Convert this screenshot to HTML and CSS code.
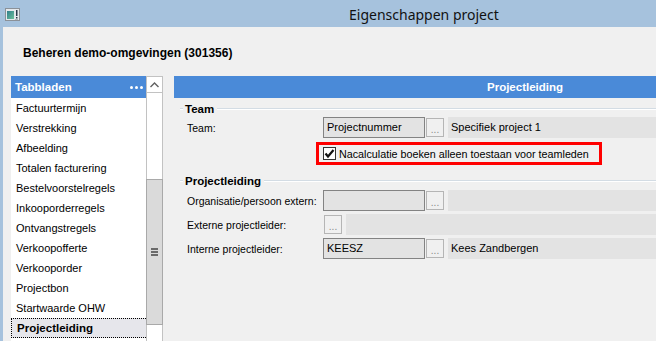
FILE: index.html
```html
<!DOCTYPE html>
<html lang="nl">
<head>
    <meta charset="UTF-8">
    <meta name="viewport" content="width=device-width, initial-scale=1.0">
    <title>Eigenschappen project</title>
    <link rel="stylesheet" href="styles.css">
</head>
<body>
    <div class="window">
        <!-- Titelbalk -->
        <div class="titlebar">
            <svg class="app-icon" width="15" height="13" viewBox="0 0 15 13">
                <defs>
                    <linearGradient id="tile" x1="0" y1="0" x2="1" y2="1">
                        <stop offset="0" stop-color="#2f7f8c"/>
                        <stop offset="1" stop-color="#6cbf9a"/>
                    </linearGradient>
                </defs>
                <rect x="0.5" y="0.5" width="14" height="12" fill="#e4e8ec" stroke="#8b9198"/>
                <rect x="2" y="3" width="7" height="8" fill="url(#tile)"/>
                <rect x="11" y="2" width="1.5" height="6" fill="#2a3a4a"/>
                <rect x="11" y="9" width="1.5" height="1.5" fill="#2a3a4a"/>
                <rect x="10" y="11" width="3" height="1" fill="#b0b6bc"/>
            </svg>
            <span class="title">Eigenschappen project</span>
        </div>

        <div class="frame">
            <h1 class="heading">Beheren demo-omgevingen (301356)</h1>

            <div class="panels">
                <!-- Tabbladen links -->
                <div class="tabs">
                    <div class="tabs-list">
                        <div class="tabs-header">
                            <span>Tabbladen</span>
                            <span class="dots"><i></i><i></i><i></i></span>
                        </div>
                        <ul class="tab-items">
                            <li>Factuurtermijn</li>
                            <li>Verstrekking</li>
                            <li>Afbeelding</li>
                            <li>Totalen facturering</li>
                            <li>Bestelvoorstelregels</li>
                            <li>Inkooporderregels</li>
                            <li>Ontvangstregels</li>
                            <li>Verkoopofferte</li>
                            <li>Verkooporder</li>
                            <li>Projectbon</li>
                            <li>Startwaarde OHW</li>
                            <li class="selected">Projectleiding</li>
                        </ul>
                    </div>
                    <div class="scrollbar">
                        <div class="scroll-up">
                            <svg width="9" height="6" viewBox="0 0 9 6">
                                <polyline points="0.5,5 4.5,1 8.5,5" fill="none" stroke="#606060" stroke-width="1.4"/>
                            </svg>
                        </div>
                        <div class="scroll-track"></div>
                        <div class="scroll-thumb">
                            <span class="grip"><i></i><i></i><i></i></span>
                        </div>
                        <div class="scroll-rest"></div>
                    </div>
                </div>

                <!-- Inhoud rechts -->
                <div class="content">
                    <div class="content-header">Projectleiding</div>

                    <div class="group-title">Team</div>
                    <div class="field-row first">
                        <span class="label">Team:</span>
                        <span class="input">Projectnummer</span>
                        <span class="browse">...</span>
                        <span class="value">Specifiek project 1</span>
                    </div>
                    <div class="check-row">
                        <span class="checkbox">
                            <svg width="11" height="11" viewBox="0 0 11 11">
                                <polyline points="1.5,5.5 4,8.5 9.5,2" fill="none" stroke="#111" stroke-width="2.2"/>
                            </svg>
                        </span>
                        <span class="check-label">Nacalculatie boeken alleen toestaan voor teamleden</span>
                    </div>

                    <div class="group-title second">Projectleiding</div>
                    <div class="field-row first-second">
                        <span class="label">Organisatie/persoon extern:</span>
                        <span class="input"></span>
                        <span class="browse">...</span>
                        <span class="value"></span>
                    </div>
                    <div class="field-row">
                        <span class="label">Externe projectleider:</span>
                        <span class="browse alone">...</span>
                        <span class="value"></span>
                    </div>
                    <div class="field-row">
                        <span class="label">Interne projectleider:</span>
                        <span class="input">KEESZ</span>
                        <span class="browse">...</span>
                        <span class="value">Kees Zandbergen</span>
                    </div>
                </div>
            </div>
        </div>
    </div>
</body>
</html>
```

FILE: styles.css
```css
html, body {
    margin: 0;
    height: 341px;
    overflow: hidden;
}

body {
    background-color: #a6c2dd;
    font-family: "Liberation Sans", Arial, sans-serif;
    font-size: 11px;
    color: #000;
}

.window {
    display: flex;
    flex-direction: column;
    height: 341px;
}

/* Titelbalk */
.titlebar {
    height: 27px;
    display: flex;
    align-items: center;
    flex-shrink: 0;
}

.app-icon {
    margin-left: 5px;
    margin-top: 1px;
}

.title {
    margin-left: 329px;
    padding-top: 2px;
    font-family: "Noto Sans", "Open Sans", sans-serif;
    font-size: 14px;
    color: #111;
}

.frame {
    flex: 1;
    margin-left: 3px;
    background-color: #f0f0f0;
    display: flex;
    flex-direction: column;
}

.heading {
    margin: 0;
    padding: 18px 0 0 20px;
    font-size: 12px;
    line-height: 16px;
    font-weight: bold;
}

.panels {
    display: flex;
    gap: 11px;
    margin-top: 15px;
    padding-left: 8px;
    flex: 1;
}

/* Tabbladen */
.tabs {
    width: 152px;
    display: flex;
}

.tabs-list {
    width: 135px;
    display: flex;
    flex-direction: column;
}

.tabs-header {
    height: 22px;
    background-color: #4a8ad8;
    color: #fff;
    font-weight: bold;
    font-size: 11.5px;
    display: flex;
    align-items: center;
    justify-content: space-between;
    padding: 0 3px 0 4px;
}

.dots {
    display: flex;
    gap: 2px;
}

.dots i {
    width: 3px;
    height: 3px;
    border-radius: 50%;
    background-color: #fff;
}

.tab-items {
    list-style: none;
    margin: 0;
    padding: 0;
    flex: 1;
    background-color: #fff;
}

.tab-items li {
    height: 20px;
    line-height: 20px;
    padding-left: 5px;
    white-space: nowrap;
}

.tab-items li.selected {
    box-sizing: border-box;
    font-weight: bold;
    font-size: 11.5px;
    line-height: 18px;
    padding-left: 5px;
    background-color: #e6e6eb;
    border: 1px dotted #000;
    border-right: none;
}

.scrollbar {
    width: 17px;
    box-sizing: border-box;
    display: flex;
    flex-direction: column;
    background-color: #fff;
    border: 1px solid #c2c2c2;
    border-bottom: none;
}

.scroll-up {
    height: 15px;
    border-bottom: 1px solid #c2c2c2;
    display: flex;
    justify-content: center;
    align-items: center;
}

.scroll-track {
    height: 86px;
}

.scroll-thumb {
    height: 144px;
    margin: 0 -1px;
    background-color: #dadada;
    border: 1px solid #a9a9a9;
    display: flex;
    justify-content: center;
    align-items: center;
}

.grip {
    display: flex;
    flex-direction: column;
    gap: 1px;
}

.grip i {
    width: 7px;
    height: 2px;
    background-color: #6a6a6a;
}

.scroll-rest {
    flex: 1;
}

/* Inhoud */
.content {
    flex: 1;
    display: flex;
    flex-direction: column;
}

.content-header {
    height: 22px;
    line-height: 22px;
    background-color: #4a8ad8;
    color: #fff;
    font-weight: bold;
    font-size: 11.5px;
    padding-left: 313px;
}

.group-title {
    display: flex;
    align-items: center;
    height: 14px;
    margin-top: 4px;
    padding-left: 6px;
    font-weight: bold;
    font-size: 11.5px;
}

.group-title.second {
    margin-top: 9px;
}

.group-title::before,
.group-title::after {
    content: "";
    height: 0;
    border-top: 1px solid #d3dce4;
    border-bottom: 1px solid #fff;
}

.group-title::before {
    width: 3px;
    margin-right: 2px;
}

.group-title::after {
    flex: 1;
    margin-left: 3px;
}

.field-row {
    display: flex;
    align-items: center;
    height: 21px;
    margin-top: 3px;
    padding-left: 13px;
}

.field-row.first {
    margin-top: 1px;
}

.field-row.first-second {
    margin-top: 2px;
}

.label {
    width: 136px;
    font-size: 10.5px;
    white-space: nowrap;
}

.input {
    width: 102px;
    height: 21px;
    box-sizing: border-box;
    border: 1px solid #838383;
    background-color: #e3e3e3;
    padding-left: 3px;
    line-height: 19px;
}

.browse {
    width: 18px;
    height: 19px;
    box-sizing: border-box;
    margin-left: 1px;
    border: 1px solid #b5b5b5;
    background-color: #f0f0f0;
    color: #8a8a8a;
    font-size: 10px;
    line-height: 22px;
    text-align: center;
}

.browse.alone {
    margin-left: 1px;
}

.value {
    flex: 1;
    height: 21px;
    margin-left: 4px;
    background-color: #e3e3e3;
    padding-left: 3px;
    line-height: 21px;
}

.check-row {
    display: flex;
    align-items: center;
    width: 286px;
    height: 23px;
    box-sizing: border-box;
    margin: 4px 0 0 142px;
    padding-left: 4px;
    border: 3px solid #ff0000;
}

.checkbox {
    width: 13px;
    height: 13px;
    box-sizing: border-box;
    border: 1px solid #333;
    background-color: #fff;
    display: flex;
    margin-right: 3px;
}

.check-label {
    font-size: 10.75px;
    white-space: nowrap;
}
```
